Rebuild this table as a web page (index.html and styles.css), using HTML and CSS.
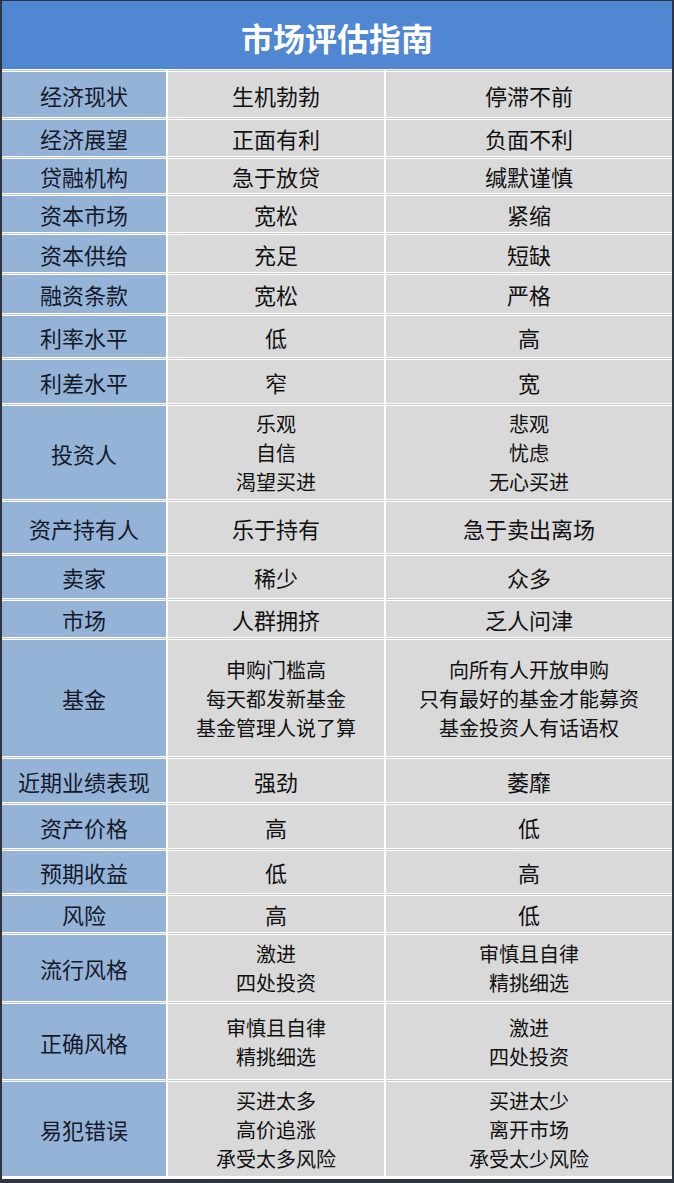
FILE: index.html
```html
<!DOCTYPE html>
<html lang="zh-CN">
<head>
<meta charset="utf-8">
<title>市场评估指南</title>
<link rel="stylesheet" href="styles.css">
</head>
<body>
<div class="sheet">
  <div class="title">市场评估指南</div>

  <div class="cell key">经济现状</div><div class="cell val">生机勃勃</div><div class="cell val">停滞不前</div>
  <div class="cell key">经济展望</div><div class="cell val">正面有利</div><div class="cell val">负面不利</div>
  <div class="cell key">贷融机构</div><div class="cell val">急于放贷</div><div class="cell val">缄默谨慎</div>
  <div class="cell key">资本市场</div><div class="cell val">宽松</div><div class="cell val">紧缩</div>
  <div class="cell key">资本供给</div><div class="cell val">充足</div><div class="cell val">短缺</div>
  <div class="cell key">融资条款</div><div class="cell val">宽松</div><div class="cell val">严格</div>
  <div class="cell key">利率水平</div><div class="cell val">低</div><div class="cell val">高</div>
  <div class="cell key">利差水平</div><div class="cell val">窄</div><div class="cell val">宽</div>
  <div class="cell key">投资人</div>
  <div class="cell val multi"><span>乐观</span><span>自信</span><span>渴望买进</span></div>
  <div class="cell val multi"><span>悲观</span><span>忧虑</span><span>无心买进</span></div>
  <div class="cell key">资产持有人</div><div class="cell val">乐于持有</div><div class="cell val">急于卖出离场</div>
  <div class="cell key">卖家</div><div class="cell val">稀少</div><div class="cell val">众多</div>
  <div class="cell key">市场</div><div class="cell val">人群拥挤</div><div class="cell val">乏人问津</div>
  <div class="cell key">基金</div>
  <div class="cell val multi"><span>申购门槛高</span><span>每天都发新基金</span><span>基金管理人说了算</span></div>
  <div class="cell val multi"><span>向所有人开放申购</span><span>只有最好的基金才能募资</span><span>基金投资人有话语权</span></div>
  <div class="cell key">近期业绩表现</div><div class="cell val">强劲</div><div class="cell val">萎靡</div>
  <div class="cell key">资产价格</div><div class="cell val">高</div><div class="cell val">低</div>
  <div class="cell key">预期收益</div><div class="cell val">低</div><div class="cell val">高</div>
  <div class="cell key">风险</div><div class="cell val">高</div><div class="cell val">低</div>
  <div class="cell key">流行风格</div>
  <div class="cell val multi"><span>激进</span><span>四处投资</span></div>
  <div class="cell val multi"><span>审慎且自律</span><span>精挑细选</span></div>
  <div class="cell key">正确风格</div>
  <div class="cell val multi"><span>审慎且自律</span><span>精挑细选</span></div>
  <div class="cell val multi"><span>激进</span><span>四处投资</span></div>
  <div class="cell key">易犯错误</div>
  <div class="cell val multi"><span>买进太多</span><span>高价追涨</span><span>承受太多风险</span></div>
  <div class="cell val multi"><span>买进太少</span><span>离开市场</span><span>承受太少风险</span></div>
</div>
</body>
</html>
```

FILE: styles.css
```css
html, body {
  margin: 0;
  padding: 0;
  background: #ffffff;
}

body {
  font-family: "Noto Sans CJK SC", "Noto Sans", sans-serif;
}

.sheet {
  box-sizing: border-box;
  width: 674px;
  height: 1183px;
  border-style: solid;
  border-color: #2e3440;
  border-width: 1px 2px 4px 2px;
  padding-bottom: 3px;
  background: #ffffff;
  display: grid;
  grid-template-columns: 164px 216px 286px;
  grid-template-rows: 68px 45px 36px 34px 36px 37px 38px 41px 43px 93px 51px 42px 36px 116px 43px 43px 42px 36px 66px 75px 94px;
  column-gap: 2px;
  row-gap: 3px;
}

.title {
  grid-column: 1 / 4;
  background: #4f87d2;
  color: #ffffff;
  font-weight: 700;
  font-size: 32px;
  display: flex;
  align-items: center;
  justify-content: center;
  padding-top: 3px;
  box-sizing: border-box;
}

.cell {
  display: flex;
  flex-direction: column;
  align-items: center;
  justify-content: center;
  text-align: center;
  font-size: 22px;
  line-height: 28px;
  color: #111111;
  box-shadow: 0 -1px 0 0 #ffffff, 0 -2px 0 0 #c9c9c9;
}

.key {
  background: #95b3d7;
  color: #141a2a;
}

.val {
  background: #d9d9d9;
}

.multi {
  font-size: 20px;
  line-height: 29px;
}

.multi span {
  display: block;
}
```
